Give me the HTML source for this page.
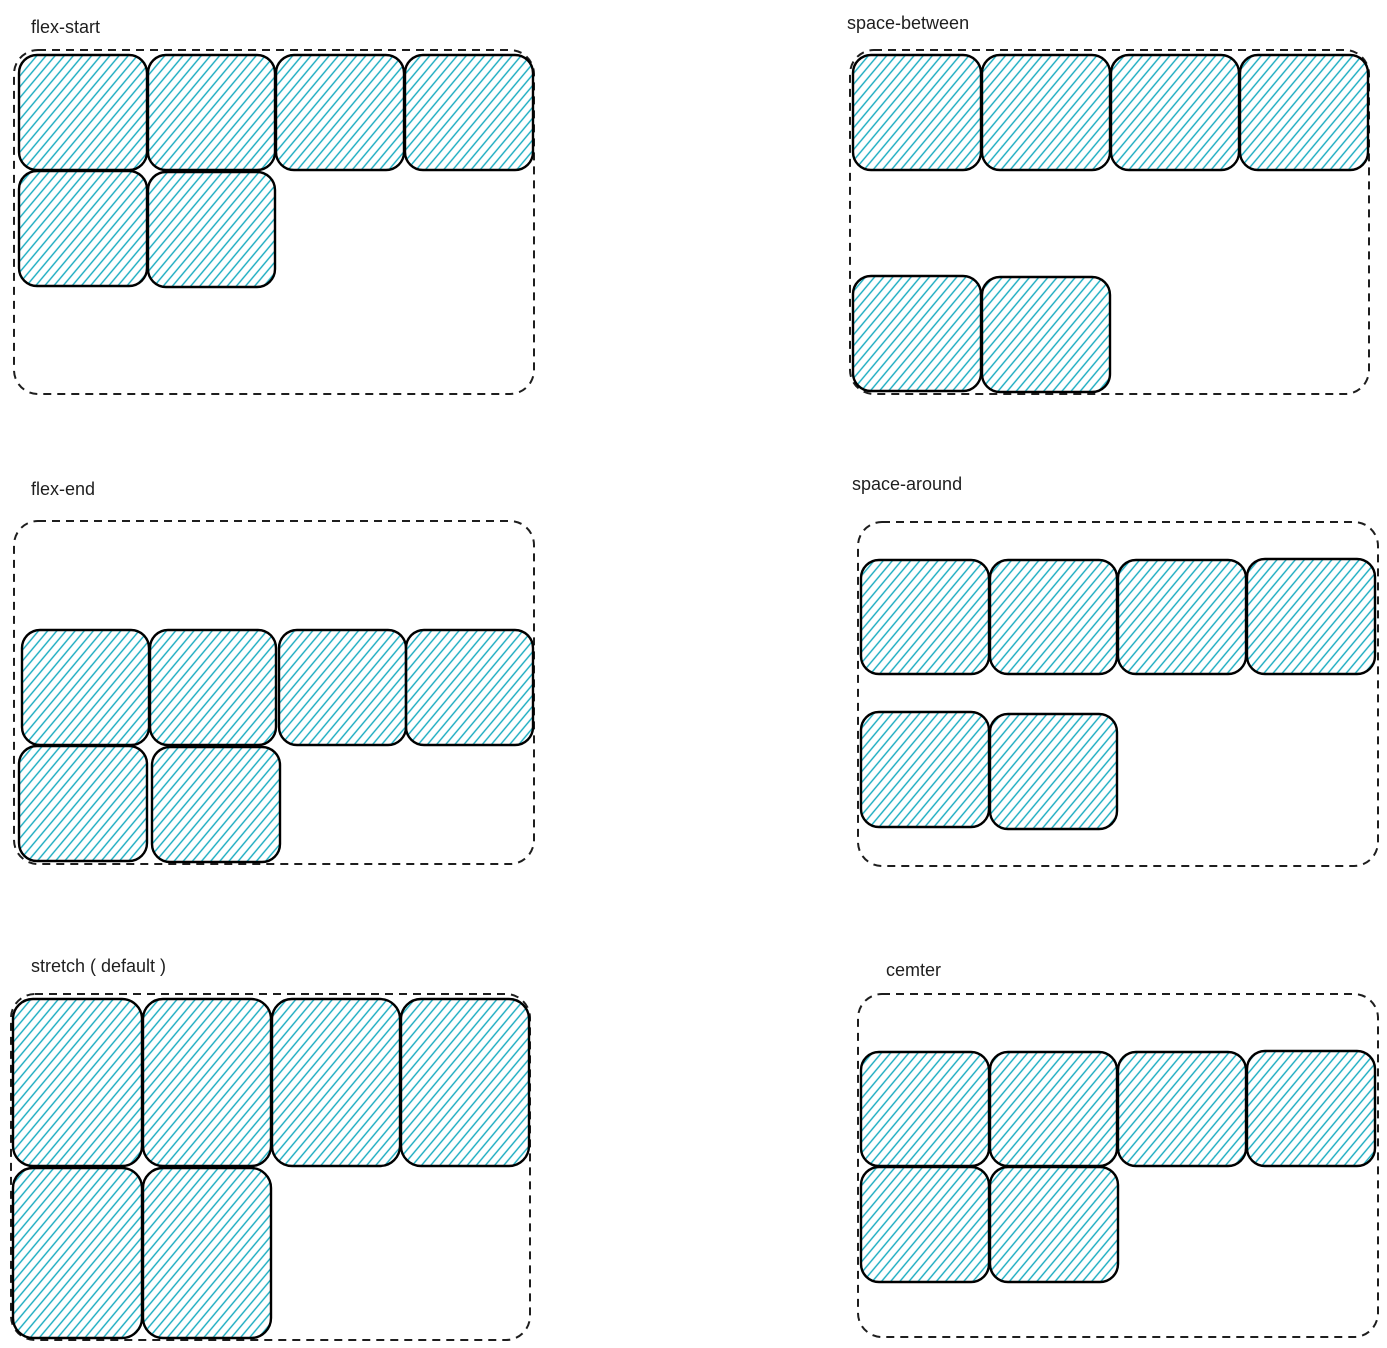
<!DOCTYPE html>
<html><head><meta charset="utf-8"><style>html,body{margin:0;padding:0;background:#fff}svg{display:block}text{font-family:"Liberation Sans",sans-serif;font-size:18px;fill:#1e1e1e}</style></head><body>
<svg width="1387" height="1348" viewBox="0 0 1387 1348" xmlns="http://www.w3.org/2000/svg">
<defs><pattern id="h" patternUnits="userSpaceOnUse" width="7" height="7" patternTransform="rotate(40)"><line x1="1" y1="0" x2="1" y2="7" stroke="#15aabf" stroke-width="1.4"/></pattern></defs>
<g fill="none" stroke="#1e1e1e" stroke-width="2" stroke-dasharray="8 6">
<rect x="14" y="50" width="520" height="344" rx="24"/>
<rect x="850" y="50" width="519" height="344" rx="24"/>
<rect x="14" y="521" width="520" height="343" rx="24"/>
<rect x="858" y="522" width="520" height="344" rx="24"/>
<rect x="11" y="994" width="519" height="346" rx="24"/>
<rect x="858" y="994" width="520" height="343" rx="24"/>
</g>
<g fill="url(#h)" stroke="#000" stroke-width="2.4">
<rect x="19" y="55" width="128" height="115" rx="18"/><rect x="148" y="55" width="127" height="115" rx="18"/><rect x="276" y="55" width="128" height="115" rx="18"/><rect x="405" y="55" width="128" height="115" rx="18"/>
<rect x="19" y="171" width="128" height="115" rx="18"/><rect x="148" y="172" width="127" height="115" rx="18"/>
<rect x="853" y="55" width="128" height="115" rx="18"/><rect x="982" y="55" width="128" height="115" rx="18"/><rect x="1111" y="55" width="128" height="115" rx="18"/><rect x="1240" y="55" width="128" height="115" rx="18"/>
<rect x="853" y="276" width="128" height="115" rx="18"/><rect x="982" y="277" width="128" height="115" rx="18"/>
<rect x="22" y="630" width="127" height="115" rx="18"/><rect x="150" y="630" width="126" height="115" rx="18"/><rect x="279" y="630" width="127" height="115" rx="18"/><rect x="406" y="630" width="127" height="115" rx="18"/>
<rect x="19" y="746" width="128" height="115" rx="18"/><rect x="152" y="747" width="128" height="115" rx="18"/>
<rect x="861" y="560" width="128" height="114" rx="18"/><rect x="990" y="560" width="127" height="114" rx="18"/><rect x="1118" y="560" width="128" height="114" rx="18"/><rect x="1247" y="559" width="128" height="115" rx="18"/>
<rect x="861" y="712" width="128" height="115" rx="18"/><rect x="990" y="714" width="127" height="115" rx="18"/>
<rect x="13" y="999" width="129" height="167" rx="20"/><rect x="143" y="999" width="128" height="167" rx="20"/><rect x="272" y="999" width="128" height="167" rx="20"/><rect x="401" y="999" width="128" height="167" rx="20"/>
<rect x="13" y="1168" width="129" height="170" rx="20"/><rect x="143" y="1168" width="128" height="170" rx="20"/>
<rect x="861" y="1052" width="128" height="114" rx="18"/><rect x="990" y="1052" width="127" height="114" rx="18"/><rect x="1118" y="1052" width="128" height="114" rx="18"/><rect x="1247" y="1051" width="128" height="115" rx="18"/>
<rect x="861" y="1167" width="128" height="115" rx="18"/><rect x="990" y="1167" width="128" height="115" rx="18"/>
</g>
<text x="31" y="33">flex-start</text>
<text x="847" y="29">space-between</text>
<text x="31" y="495">flex-end</text>
<text x="852" y="490">space-around</text>
<text x="31" y="972">stretch ( default )</text>
<text x="886" y="976">cemter</text>
</svg>
</body></html>
